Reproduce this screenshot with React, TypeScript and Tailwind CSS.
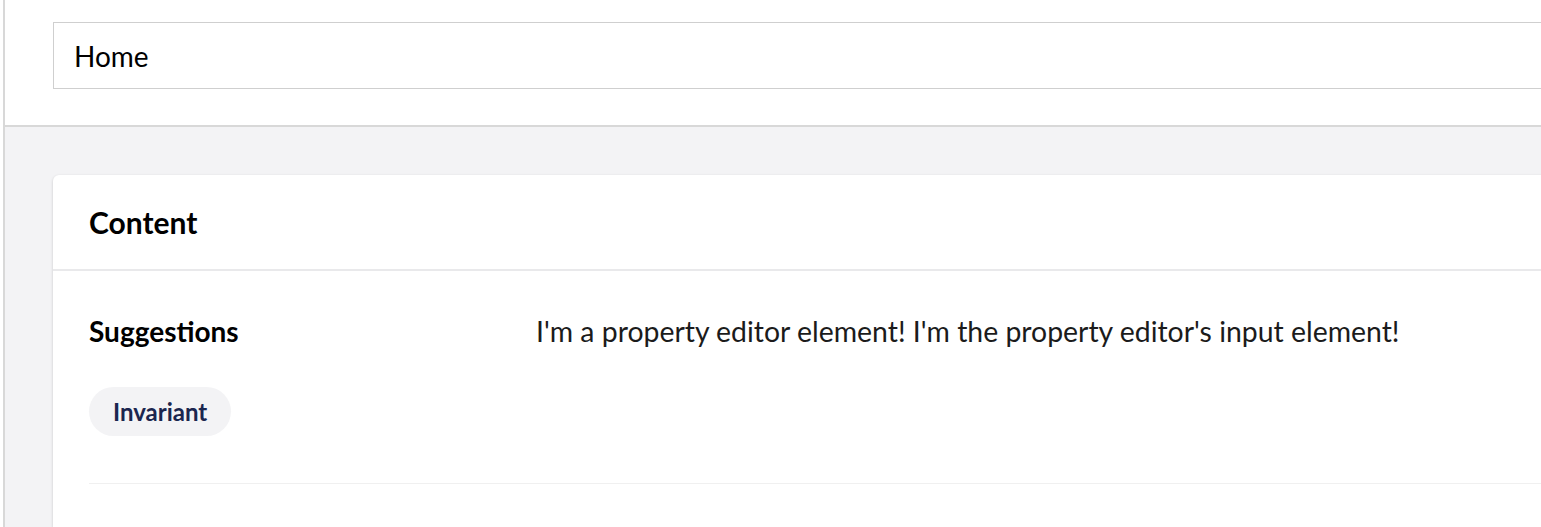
import React from 'react';

const App = () => {
  return (
    <div className="flex h-[527px] w-[1541px] overflow-hidden bg-white font-['Lato',sans-serif] text-[#1b1b1b]">
      {/* Sidebar edge */}
      <div className="w-[3px] shrink-0 border-r-2 border-[#d8d8d8] box-content" />

      <div className="flex min-w-[1640px] flex-col">
        {/* Header */}
        <div className="h-[127px] shrink-0 border-b-2 border-[#d8d8d8] px-[48px] pt-[22px]">
          <div className="flex h-[67px] items-center border border-[#cfcfcf] px-[20px] text-[28px] text-black">
            Home
          </div>
        </div>

        {/* Workspace */}
        <div className="flex-1 bg-[#f3f3f5] px-[48px] pt-[48px]">
          <div className="h-full rounded-t-[6px] bg-white shadow-[0_1px_3px_rgba(0,0,0,0.18)]">
            <div className="flex h-[96px] items-center border-b-2 border-[#e9e9eb] px-[36px] text-[30px] font-bold text-black">
              Content
            </div>
            <div className="mx-[36px] flex border-b border-[#f0f0f0] pb-[47px] pt-[40px]">
              <div className="w-[447px] shrink-0">
                <div className="text-[28px] font-bold leading-[40px] text-black">Suggestions</div>
                <span className="mt-[36px] inline-flex h-[49px] items-center rounded-full bg-[#f3f3f5] px-[24px] text-[24px] font-bold text-[#1b264f]">
                  Invariant
                </span>
              </div>
              <div className="text-[28.4px] leading-[40px] text-[#1b1b1b]">
                I'm a property editor element! I'm the property editor's input element!
              </div>
            </div>
          </div>
        </div>
      </div>
    </div>
  );
};

export default App;
